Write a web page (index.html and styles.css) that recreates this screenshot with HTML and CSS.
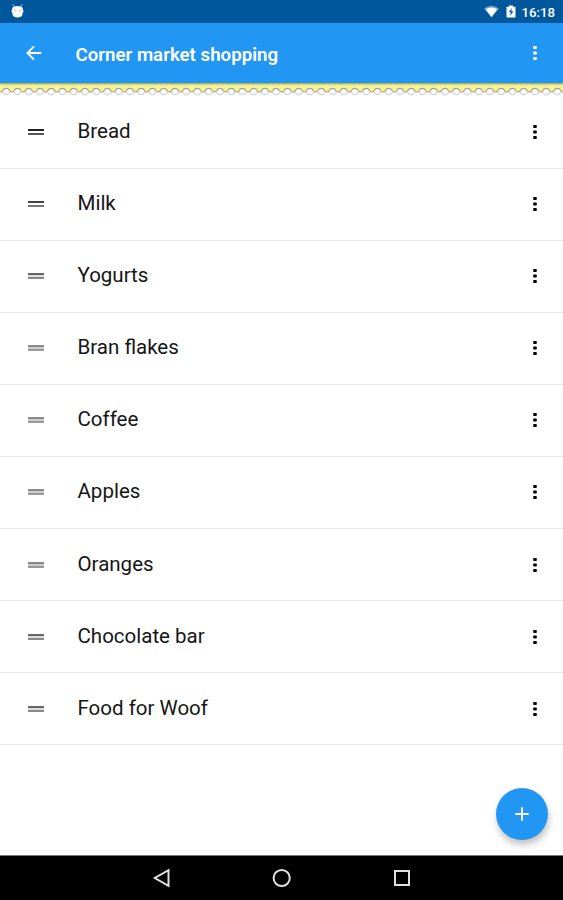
FILE: index.html
```html
<!DOCTYPE html>
<html lang="en">
<head>
<meta charset="utf-8">
<title>Corner market shopping</title>
<link rel="stylesheet" href="styles.css">
</head>
<body>
<svg class="defs" width="0" height="0" aria-hidden="true">
  <symbol id="more" viewBox="0 0 6 18"><rect x="1.200" y="1.900" width="3.600" height="3.200" rx=".8"/><rect x="1.200" y="7.400" width="3.600" height="3.200" rx=".8"/><rect x="1.200" y="12.900" width="3.600" height="3.200" rx=".8"/></symbol>
</svg>
<div class="status">
  <svg class="robot" width="15" height="16" viewBox="0 0 15 16"><path d="M2.700 1.500l2 2.300M12.300 1.500l-2 2.300" stroke="#cfe3f4" stroke-width="1"/><path d="M2.500 4.500Q4 3 7.500 3t5 1.500L13 7l.7 1-.9 1.500-.6 3Q11 14.500 7.500 14.500T2.800 12.500l-.6-3L1.300 8 2 7z" fill="#fff"/><path d="M4 7.500h2.200M8.800 7.500H11" stroke="#b9cfe2"/></svg>
  <svg class="wifi" width="15" height="13" viewBox="0 0 15 13"><path d="M0 3.500Q7.500-2 15 3.500L7.500 12.600z" fill="#6fa3cf"/><path d="M1.800 4.300Q7.500.8 13.200 4.300L7.500 12z" fill="#fff"/></svg>
  <svg class="battery" width="10" height="13" viewBox="0 0 10 13"><path d="M3 .5h4v1.300h2.500V12.500H.5V1.800H3z" fill="#fff"/><path d="M5.800 3L2.800 7.300h2L4.300 11l3-4.700h-2z" fill="#01579b"/></svg>
  <span class="clock">16:18</span>
</div>
<header class="bar">
  <svg class="back" width="16" height="16" viewBox="0 0 16 16"><path d="M15.300 8H1.800M8 1.400L1.400 8 8 14.600" fill="none" stroke="#fff" stroke-width="1.900"/></svg>
  <h1>Corner market shopping</h1>
  <svg class="more" width="6" height="18" fill="#fff"><use href="#more"/></svg>
</header>
<svg class="edge" width="563" height="14">
  <defs>
    <pattern id="scallop" x=".6" width="11.25" height="14" patternUnits="userSpaceOnUse">
      <path d="M0 0h11.250v8.500H9.200Q8.600 5.400 5.600 5.400T2 8.500H0z" fill="#f8f391"/>
      <path d="M-.2 9Q1.700 9.200 2.300 7.500Q3.200 5.400 5.600 5.400T8.900 7.500Q9.600 9.200 11.450 9" fill="none" stroke="#a5a096" stroke-width="1.100"/>
      <path d="M2 9Q3 11.700 5.600 11.700T9.300 9" fill="none" stroke="#d6d6da" stroke-width="1.200"/>
    </pattern>
    <linearGradient id="shade" x2="0" y2="1"><stop stop-color="#8aa169"/><stop offset="1" stop-color="#d5d67c" stop-opacity="0"/></linearGradient>
  </defs>
  <rect width="563" height="14" fill="url(#scallop)"/>
  <rect width="563" height="3" fill="url(#shade)"/>
</svg>
<ul class="list">
  <li><i class="grip g1"></i><span>Bread</span><svg class="more" width="6" height="18"><use href="#more"/></svg></li>
  <li><i class="grip g2"></i><span>Milk</span><svg class="more" width="6" height="18"><use href="#more"/></svg></li>
  <li><i class="grip g3"></i><span>Yogurts</span><svg class="more" width="6" height="18"><use href="#more"/></svg></li>
  <li><i class="grip g4"></i><span>Bran flakes</span><svg class="more" width="6" height="18"><use href="#more"/></svg></li>
  <li><i class="grip g4"></i><span>Coffee</span><svg class="more" width="6" height="18"><use href="#more"/></svg></li>
  <li><i class="grip g4"></i><span>Apples</span><svg class="more" width="6" height="18"><use href="#more"/></svg></li>
  <li><i class="grip g4"></i><span>Oranges</span><svg class="more" width="6" height="18"><use href="#more"/></svg></li>
  <li><i class="grip g3"></i><span>Chocolate bar</span><svg class="more" width="6" height="18"><use href="#more"/></svg></li>
  <li><i class="grip g3"></i><span>Food for Woof</span><svg class="more" width="6" height="18"><use href="#more"/></svg></li>
</ul>
<div class="fab"><svg width="14" height="14" viewBox="0 0 14 14"><path d="M7 .3v13.400M.3 7h13.400" stroke="#fff" stroke-width="1.900"/></svg></div>
<nav class="nav">
  <svg width="20" height="20" viewBox="0 0 20 20"><path d="M16.500 2.200v15.600L2.800 10z"/></svg>
  <svg width="20" height="20" viewBox="0 0 20 20"><circle cx="9.700" cy="10" r="8.100"/></svg>
  <svg width="20" height="20" viewBox="0 0 20 20"><rect x="3" y="3" width="14" height="14"/></svg>
</nav>
</body>
</html>
```
FILE: styles.css
```css
* { box-sizing: border-box; }
body {
  margin: 0;
  height: 900px;
  overflow: hidden;
  display: flex;
  flex-direction: column;
  background: #fff;
  color: #151515;
  font-family: Roboto, "Liberation Sans", sans-serif;
}
.defs { position: absolute; }
.status {
  flex: none;
  height: 23px;
  display: flex;
  align-items: center;
  padding: 0 8px 0 10px;
  background: #01579b;
  color: #fff;
}
.robot { margin-top: -1px; }
.wifi { margin-left: auto; margin-right: 7px; }
.battery { margin-right: 6px; }
.clock { font-size: 13.2px; font-weight: 500; line-height: 23px; padding-top: 2px; }
.bar {
  flex: none;
  height: 60px;
  display: flex;
  align-items: center;
  padding: 0 25px 0 26px;
  background: #2196f3;
  color: #fff;
}
.back { margin-right: 33.5px; }
h1 { margin: 3px 0 0; font-size: 18.7px; font-weight: 600; }
.more { margin-left: auto; flex: none; }
.edge { flex: none; display: block; margin-bottom: -.6px; }
.list { flex: 1; margin: 0; padding: 0; list-style: none; }
.list li {
  height: 72.1px;
  display: flex;
  align-items: center;
  padding: 0 25px 0 28px;
  border-bottom: 1px solid #e8e8e8;
  font-size: 20.5px;
}
.list span { margin-top: -2px; }
.grip {
  width: 16px;
  height: 6px;
  margin-right: 33.5px;
  border-top: 2px solid #222;
  border-bottom: 2px solid #555;
}
.g2 { border-top-color: #444; border-bottom-color: #777; }
.g3 { border-top-color: #666; border-bottom-color: #888; background: #ddd; }
.g4 { border-top-color: #888; border-bottom-color: #999; background: #ccc; }
.fab {
  position: absolute;
  left: 496px;
  top: 788px;
  width: 52px;
  height: 52px;
  border-radius: 50%;
  display: flex;
  align-items: center;
  justify-content: center;
  background: #2196f3;
  box-shadow: 1px 5px 7px rgba(0, 0, 0, .24);
}
.nav {
  flex: none;
  height: 45px;
  display: flex;
  align-items: center;
  justify-content: center;
  gap: 100px;
  border-top: 1px solid #777;
  background: #000;
}
.nav svg { fill: none; stroke: #e0e0e0; stroke-width: 2; }
```
